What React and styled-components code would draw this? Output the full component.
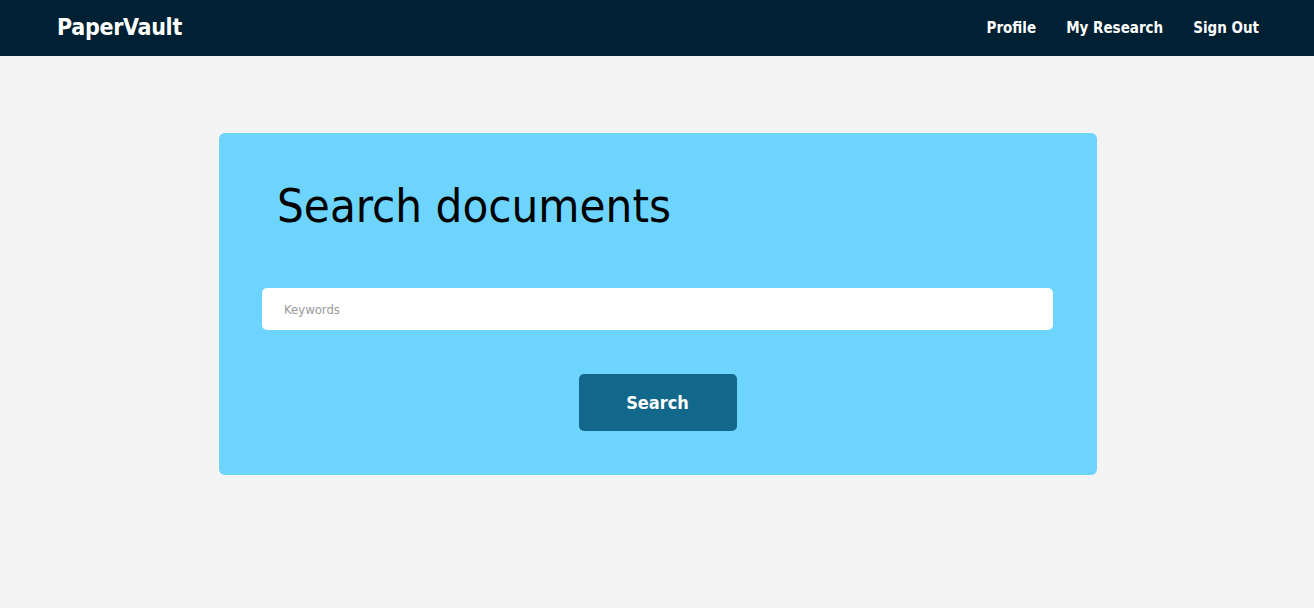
import React, { useState } from "react";
import styled, { createGlobalStyle } from "styled-components";

const GlobalStyle = createGlobalStyle`
  html, body {
    margin: 0;
    padding: 0;
    background: #f4f4f4;
    font-family: "Liberation Sans Narrow", "DejaVu Sans Condensed", "Liberation Sans", sans-serif;
  }
  * { box-sizing: border-box; }
`;

const Page = styled.div`
  min-height: 608px;
  background: #f4f4f4;
  overflow: hidden;
`;

const Nav = styled.nav`
  height: 56px;
  background: #002033;
  display: flex;
  align-items: center;
  justify-content: space-between;
  padding: 0 55px 2px 57px;
  .brand {
    color: #ffffff;
    font-size: 23px;
    font-weight: 700;
    text-decoration: none;
    letter-spacing: -0.3px;
  }
  ul {
    display: flex;
    list-style: none;
    margin: 0;
    padding: 0;
    gap: 30px;
    li a {
      color: #ffffff;
      font-size: 15px;
      font-weight: 700;
      text-decoration: none;
    }
  }
`;

const Card = styled.section`
  width: 878px;
  margin: 77px 0 0 calc(50% - 438px);
  background: #6dd5fd;
  border-radius: 6px;
  padding: 38px 44px 44px 43px;
  display: flex;
  flex-direction: column;
  h1 {
    margin: 0 0 0 15px;
    font-size: 47px;
    font-weight: 400;
    line-height: 70px;
    color: #000000;
  }
`;

const Input = styled.input`
  margin-top: 47px;
  width: 100%;
  height: 42px;
  border: none;
  border-radius: 5px;
  background: #ffffff;
  padding: 0 22px;
  font-family: inherit;
  font-size: 13px;
  color: #333;
  outline: none;
  &::placeholder {
    color: #9a9a9a;
  }
`;

const Button = styled.button`
  align-self: center;
  margin-top: 44px;
  width: 158px;
  height: 57px;
  border: none;
  border-radius: 5px;
  background: #12688a;
  color: #ffffff;
  font-family: inherit;
  font-size: 18px;
  font-weight: 700;
  cursor: pointer;
`;

const links = ["Profile", "My Research", "Sign Out"];

export default function App() {
  const [keywords, setKeywords] = useState("");
  return (
    <Page>
      <GlobalStyle />
      <Nav>
        <a className="brand" href="#">PaperVault</a>
        <ul>
          {links.map((l) => (
            <li key={l}>
              <a href="#">{l}</a>
            </li>
          ))}
        </ul>
      </Nav>
      <Card>
        <h1>Search documents</h1>
        <Input
          placeholder="Keywords"
          value={keywords}
          onChange={(e) => setKeywords(e.target.value)}
        />
        <Button>Search</Button>
      </Card>
    </Page>
  );
}
